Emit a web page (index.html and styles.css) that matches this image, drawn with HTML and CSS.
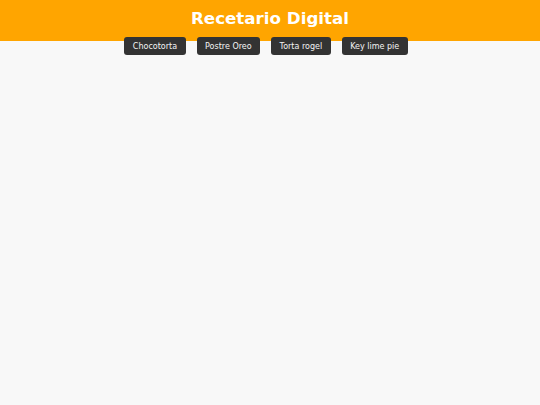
FILE: index.html
```html
<!DOCTYPE html>
<html lang="es">
<head>
<meta charset="utf-8">
<title>Recetario Digital</title>
<link rel="stylesheet" href="styles.css">
</head>
<body>
<header class="header">
  <h1 class="title">Recetario Digital</h1>
</header>
<nav class="nav">
  <button class="btn">Chocotorta</button>
  <button class="btn">Postre Oreo</button>
  <button class="btn">Torta rogel</button>
  <button class="btn">Key lime pie</button>
</nav>
</body>
</html>
```
FILE: styles.css
```css
html, body {
  margin: 0;
  padding: 0;
}
body {
  background: #f8f8f8;
  font-family: "DejaVu Sans", sans-serif;
  min-height: 405px;
}
.header {
  background: #ffa500;
  height: 41px;
  display: flex;
  align-items: center;
  justify-content: center;
}
.title {
  margin: 0;
  color: #fff;
  font-size: 16.7px;
  font-weight: bold;
  line-height: 1;
  position: relative;
  top: -2px;
}
.nav {
  display: flex;
  justify-content: center;
  gap: 11px;
  margin-top: -4px;
  padding-right: 8px;
}
.btn {
  font-family: "DejaVu Sans", sans-serif;
  font-size: 8px;
  color: #f4f4f4;
  background: #333;
  border: none;
  border-radius: 3px;
  height: 18px;
  padding: 0 8.5px;
}
```
